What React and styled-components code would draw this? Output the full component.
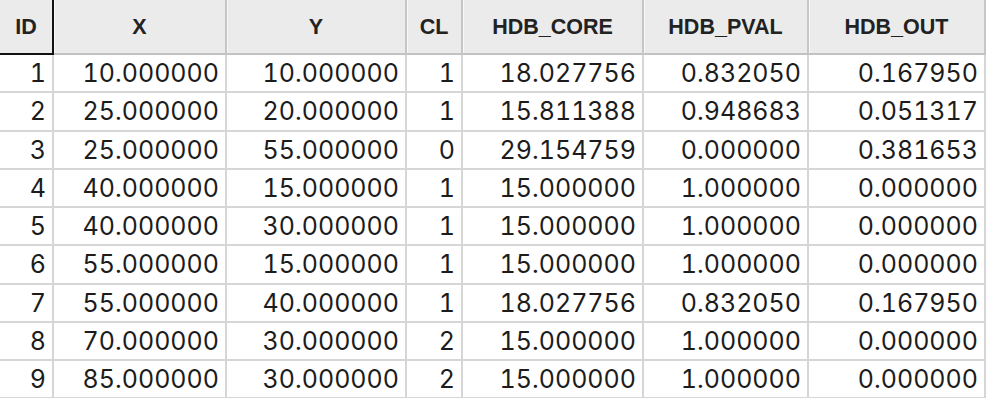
import React from "react";
import styled, { createGlobalStyle } from "styled-components";

const Global = createGlobalStyle`
  html, body { margin: 0; padding: 0; background: #ffffff; }
  body { font-family: "Liberation Sans", Arial, sans-serif; }
`;

const columns = [
  { key: "id", label: "ID", width: 54 },
  { key: "x", label: "X", width: 173 },
  { key: "y", label: "Y", width: 180 },
  { key: "cl", label: "CL", width: 56 },
  { key: "core", label: "HDB_CORE", width: 181 },
  { key: "pval", label: "HDB_PVAL", width: 165 },
  { key: "out", label: "HDB_OUT", width: 177 },
];

const rows = [
  [1, "10.000000", "10.000000", 1, "18.027756", "0.832050", "0.167950"],
  [2, "25.000000", "20.000000", 1, "15.811388", "0.948683", "0.051317"],
  [3, "25.000000", "55.000000", 0, "29.154759", "0.000000", "0.381653"],
  [4, "40.000000", "15.000000", 1, "15.000000", "1.000000", "0.000000"],
  [5, "40.000000", "30.000000", 1, "15.000000", "1.000000", "0.000000"],
  [6, "55.000000", "15.000000", 1, "15.000000", "1.000000", "0.000000"],
  [7, "55.000000", "40.000000", 1, "18.027756", "0.832050", "0.167950"],
  [8, "70.000000", "30.000000", 2, "15.000000", "1.000000", "0.000000"],
  [9, "85.000000", "30.000000", 2, "15.000000", "1.000000", "0.000000"],
];

const template = columns.map((c) => `${c.width}px`).join(" ");

const Grid = styled.div`
  display: grid;
  grid-template-columns: ${template};
  grid-template-rows: 55px repeat(9, 38.25px);
  width: 986px;
  background: #ffffff;
`;

const HeadCell = styled.div`
  box-sizing: border-box;
  display: flex;
  align-items: center;
  justify-content: center;
  background: #ebebeb;
  border-right: 2px solid ${(p) => (p.$active ? "#111111" : "#c6c6c6")};
  border-bottom: 2px solid ${(p) => (p.$active ? "#111111" : "#c2c2c2")};
  box-shadow: ${(p) => (p.$first ? "none" : "inset 1px 0 0 #f7f7f7")};
  font-family: "Liberation Sans", Arial, sans-serif;
  font-weight: 700;
  font-size: 21.5px;
  color: #222222;
  padding-top: 1px;
`;

const Cell = styled.div`
  box-sizing: border-box;
  display: flex;
  align-items: center;
  justify-content: flex-end;
  padding-right: 6px;
  border-right: 2px solid #d6d6d6;
  border-bottom: 2px solid #d6d6d6;
  font-family: Inter, "Liberation Sans", sans-serif;
  font-variant-numeric: tabular-nums;
  font-size: 25px;
  color: #1c1c1c;
  white-space: nowrap;
`;

export default function App() {
  return (
    <>
      <Global />
      <Grid>
        {columns.map((c, i) => (
          <HeadCell key={c.key} $active={i === 0} $first={i === 0}>
            {c.label}
          </HeadCell>
        ))}
        {rows.map((r) =>
          r.map((v, i) => <Cell key={`${r[0]}-${i}`}>{v}</Cell>)
        )}
      </Grid>
    </>
  );
}
